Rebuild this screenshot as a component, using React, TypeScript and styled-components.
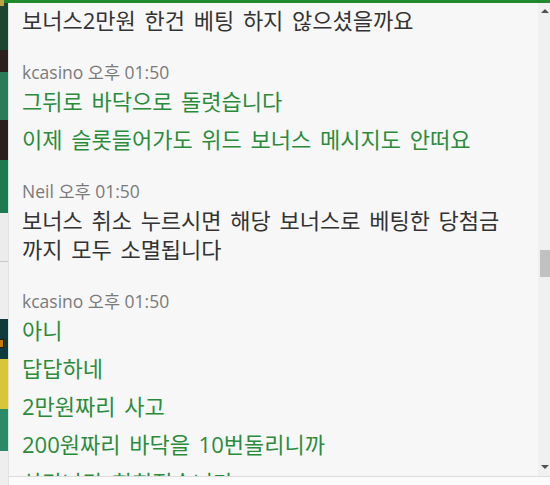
import React from "react";
import styled, { createGlobalStyle } from "styled-components";

const Global = createGlobalStyle`
  html, body { margin: 0; padding: 0; background: #efefef; }
  body { font-family: "Open Sans", "Noto Sans CJK KR", sans-serif; }
  * { box-sizing: border-box; }
`;

const Frame = styled.div`
  width: 550px;
  height: 485px;
  display: flex;
  flex-direction: column;
  overflow: hidden;
  background: #eeeeee;
`;

const TopBar = styled.div`
  height: 3px;
  background: #1f8a2d;
  flex: none;
`;

const Body = styled.div`
  flex: 1;
  display: flex;
  min-height: 0;
`;

const Strip = styled.div`
  width: 9px;
  flex: none;
  display: flex;
  flex-direction: column;
  border-right: 1px solid #e2e2e2;
`;

const Thumb = styled.div<{ $c: string; $h: number; $line?: boolean }>`
  height: ${(p) => p.$h}px;
  flex: none;
  background: ${(p) => p.$c};
  border-bottom: ${(p) => (p.$line ? "1px solid #c8c8c8" : "none")};
  position: relative;
`;

const Badge = styled.span`
  position: absolute;
  left: 0;
  top: 20px;
  width: 4px;
  height: 9px;
  background: #c47a12;
  border: 1px solid #2a1a0a;
  border-left: none;
`;

const Corner = styled.span`
  position: absolute;
  left: 0;
  top: -3px;
  width: 4px;
  height: 6px;
  background: #b9a542;
`;

const Panel = styled.div`
  flex: 1;
  display: flex;
  flex-direction: column;
  background: #f7f7f7;
  min-width: 0;
`;

const ChatRow = styled.div`
  flex: 1;
  display: flex;
  min-height: 0;
`;

const Chat = styled.div`
  flex: 1;
  overflow: hidden;
  padding: 3px 0 0 13px;
  display: flex;
  flex-direction: column;
  gap: 22px;
`;

const Group = styled.div`
  display: flex;
  flex-direction: column;
  gap: 9px;
`;

const Meta = styled.div`
  font-size: 17.5px;
  line-height: 30px;
  height: 30px;
  color: #7a7a7a;
  margin-bottom: -9px;
`;

const Msg = styled.div<{ $mine?: boolean }>`
  font-size: 22px;
  line-height: 29px;
  word-spacing: 3px;
  word-break: keep-all;
  color: ${(p) => (p.$mine ? "#2a8c3b" : "#333333")};
  white-space: pre-wrap;
  padding-right: 8px;
  flex: none;
`;

const Scroll = styled.div`
  width: 12px;
  flex: none;
  background: #f0f0f0;
  display: flex;
  flex-direction: column;
  align-items: center;
  justify-content: space-between;
  position: relative;
`;

const Arrow = styled.div<{ $down?: boolean }>`
  width: 0;
  height: 0;
  border-left: 4px solid transparent;
  border-right: 4px solid transparent;
  ${(p) =>
    p.$down
      ? "border-top: 4px solid #505050; margin-bottom: 7px;"
      : "border-bottom: 4px solid #505050; margin-top: 6px;"}
  margin-left: 2px;
`;

const ThumbBar = styled.div`
  position: absolute;
  top: 247px;
  right: 0;
  width: 10px;
  height: 27px;
  background: #c1c1c1;
`;

const InputArea = styled.div`
  height: 9px;
  flex: none;
  border-top: 1px solid #dcdcdc;
  background: #fbfbfb;
`;

type Item = { meta?: string; lines: string[]; mine?: boolean };

const groups: Item[] = [
  { lines: ["보너스2만원 한건 베팅 하지 않으셨을까요"] },
  {
    meta: "kcasino 오후 01:50",
    mine: true,
    lines: ["그뒤로 바닥으로 돌렷습니다", "이제 슬롯들어가도 위드 보너스 메시지도 안떠요"],
  },
  {
    meta: "Neil 오후 01:50",
    lines: ["보너스 취소 누르시면 해당 보너스로 베팅한 당첨금 까지 모두 소멸됩니다"],
  },
  {
    meta: "kcasino 오후 01:50",
    mine: true,
    lines: ["아니", "답답하네", "2만원짜리 사고", "200원짜리 바닥을 10번돌리니까", "상만나라 회회적습니다"],
  },
];

const thumbs: { c: string; h: number; line?: boolean; badge?: boolean; corner?: boolean }[] = [
  { c: "#1d4631", h: 47, corner: true },
  { c: "#2b201c", h: 22 },
  { c: "#2b7b58", h: 48 },
  { c: "#2a1e1a", h: 40 },
  { c: "#1f7a50", h: 53 },
  { c: "#ececec", h: 49, line: true },
  { c: "#eeeeee", h: 57 },
  { c: "#0f3b3c", h: 40, badge: true },
  { c: "#d9c53a", h: 50 },
  { c: "#2d8a68", h: 42 },
  { c: "#eeeeee", h: 40 },
];

export default function App() {
  return (
    <Frame>
      <Global />
      <TopBar />
      <Body>
        <Strip>
          {thumbs.map((t, i) => (
            <Thumb key={i} $c={t.c} $h={t.h} $line={t.line}>
              {t.corner && <Corner />}
              {t.badge && <Badge />}
            </Thumb>
          ))}
        </Strip>
        <Panel>
          <ChatRow>
            <Chat>
              {groups.map((g, i) => (
                <Group key={i}>
                  {g.meta && <Meta>{g.meta}</Meta>}
                  {g.lines.map((l, j) => (
                    <Msg key={j} $mine={g.mine}>
                      {l}
                    </Msg>
                  ))}
                </Group>
              ))}
            </Chat>
            <Scroll>
              <Arrow />
              <ThumbBar />
              <Arrow $down />
            </Scroll>
          </ChatRow>
          <InputArea />
        </Panel>
      </Body>
    </Frame>
  );
}
